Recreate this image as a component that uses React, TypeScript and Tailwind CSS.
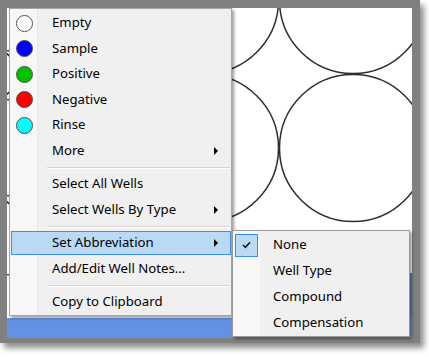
import React from 'react';

const font = { fontFamily: '"Noto Sans", "Open Sans", sans-serif' };

type Item = { label: string; color?: string; arrow?: boolean; active?: boolean };

const wellTypes: Item[] = [
  { label: 'Empty', color: '#ffffff' },
  { label: 'Sample', color: '#0000ff' },
  { label: 'Positive', color: '#00c000' },
  { label: 'Negative', color: '#ff0000' },
  { label: 'Rinse', color: '#00ffff' },
  { label: 'More', arrow: true },
];

function Arrow() {
  return <span className="w-0 h-0 border-y-[4px] border-y-transparent border-l-[4px] border-l-black" />;
}

function Separator() {
  return (
    <div className="h-[8px] flex flex-col justify-center pl-[37px] pr-[1px]">
      <div className="h-px bg-[#d4d4d4]" />
      <div className="h-px bg-white" />
    </div>
  );
}

function MenuRow({ item }: { item: Item }) {
  return (
    <div className="h-[25.5px] ml-px">
      <div
        className={`h-[24px] flex items-center border ${
          item.active ? 'bg-[#b9d9f5] border-[#3c8fe3]' : 'border-transparent'
        }`}
      >
        <div className="w-[40px] flex items-center">
          {item.color && (
            <span
              className="ml-[4px] w-[17px] h-[17px] rounded-full border border-[#505050]"
              style={{ backgroundColor: item.color }}
            />
          )}
        </div>
        <span className="flex-1 text-black">{item.label}</span>
        {item.arrow && <div className="pr-[12px] flex items-center"><Arrow /></div>}
      </div>
    </div>
  );
}

function WellCanvas() {
  const circles = [
    [50, -8],
    [198, -8],
    [346, -8],
    [50, 140],
    [198, 140],
    [346, 140],
  ];
  return (
    <svg width="405" height="310" className="block">
      <rect width="405" height="310" fill="#ffffff" />
      {circles.map(([cx, cy], i) => (
        <circle key={i} cx={cx} cy={cy} r="73.5" fill="none" stroke="#2e2e2e" strokeWidth="1.5" />
      ))}
      <rect x="402" y="265" width="3" height="45" fill="#5a7fc4" />
      {[42, 91, 187, 266].map((y) => (
        <rect key={y} x="0" y={y} width="2" height="1.5" fill="#444" />
      ))}
    </svg>
  );
}

export default function App() {
  return (
    <div className="relative w-[429px] h-[357px] bg-white overflow-hidden text-[13.2px]" style={font}>
      {/* window frame */}
      <div className="w-[420px] h-[343px] bg-[#808080] pt-[8px] pl-[7px] pr-[8px] pb-[5px] shadow-[4px_5px_6px_rgba(0,0,0,0.45)]">
        <div className="flex flex-col">
          <WellCanvas />
          <div className="h-[20px] bg-[#6291e6]" />
        </div>
      </div>

      {/* context menu */}
      <div className="absolute left-[9px] top-[8px] w-[223px] h-[308px] border border-[#a6a6a6] pt-[2px] bg-[linear-gradient(to_right,#f7f7f7_27px,#e9e9e9_27px,#e9e9e9_28px,#f0f0f0_28px)] shadow-[2px_2px_3px_rgba(0,0,0,0.4)]">
        {wellTypes.map((it) => (
          <MenuRow key={it.label} item={it} />
        ))}
        <Separator />
        <MenuRow item={{ label: 'Select All Wells' }} />
        <MenuRow item={{ label: 'Select Wells By Type', arrow: true }} />
        <Separator />
        <MenuRow item={{ label: 'Set Abbreviation', arrow: true, active: true }} />
        <MenuRow item={{ label: 'Add/Edit Well Notes...' }} />
        <Separator />
        <MenuRow item={{ label: 'Copy to Clipboard' }} />
      </div>

      {/* abbreviation submenu */}
      <div className="absolute left-[232px] top-[230px] w-[178px] h-[107px] border border-[#9a9a9a] pt-px bg-[linear-gradient(to_right,#f7f7f7_27px,#f0f0f0_27px)] shadow-[2px_2px_3px_rgba(0,0,0,0.4)]">
        {['None', 'Well Type', 'Compound', 'Compensation'].map((label, i) => (
          <div key={label} className="h-[26px] flex items-center">
            <div className="w-[40px] pl-[2px] flex items-center">
              {i === 0 && (
                <div className="w-[23px] h-[23px] bg-[#b9d9f5] border border-[#3c8fe3] flex items-center justify-center">
                  <svg width="9" height="8" viewBox="0 0 9 8">
                    <path d="M1 4 L3.4 6.4 L8 1.2" fill="none" stroke="#1a1a1a" strokeWidth="1.6" />
                  </svg>
                </div>
              )}
            </div>
            <span className="text-black">{label}</span>
          </div>
        ))}
      </div>
    </div>
  );
}
